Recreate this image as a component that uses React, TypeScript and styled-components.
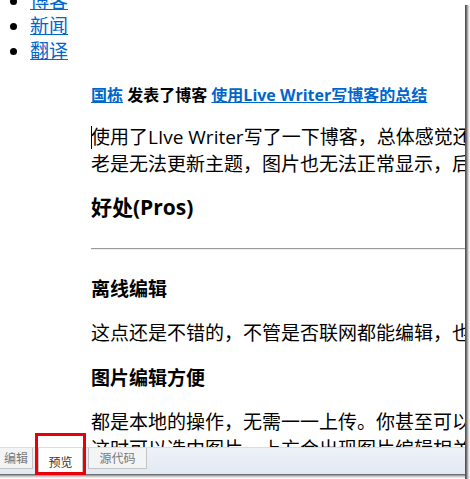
import styled, { createGlobalStyle } from "styled-components";

const GlobalStyle = createGlobalStyle`
  html, body {
    margin: 0;
    padding: 0;
    background: #ffffff;
    overflow: hidden;
  }
  body {
    font-family: "Open Sans", "Noto Sans CJK SC", sans-serif;
    color: #000000;
  }
`;

const navItems = ["博客", "新闻", "翻译"];

const paragraphs = {
  intro: [
    "使用了LIve Writer写了一下博客，总体感觉还不错，就是",
    "老是无法更新主题，图片也无法正常显示，后来才发现",
  ],
  offline: ["这点还是不错的，不管是否联网都能编辑，也不怕丢失"],
  images: [
    "都是本地的操作，无需一一上传。你甚至可以直接粘贴，",
    "这时可以选中图片，上方会出现图片编辑相关的工具栏。",
  ],
};

const tabs = [
  { label: "编辑", active: false },
  { label: "预览", active: true },
  { label: "源代码", active: false },
];

const App = () => {
  return <>
    <GlobalStyle />
    <Window>
      <Column>
        <Viewport>
          <NavList>
            {navItems.map(item =>
              <NavItem key={item}><Link href="#">{item}</Link></NavItem>)}
          </NavList>
          <Post>
            <PostMeta>
              <Link href="#">国栋</Link> 发表了博客 <Link href="#">使用Live Writer写博客的总结</Link>
            </PostMeta>
            <Para>
              <Caret />
              {paragraphs.intro[0]}<br />{paragraphs.intro[1]}
            </Para>
            <SectionTitle>好处(Pros)</SectionTitle>
            <Rule />
            <SubTitle first>离线编辑</SubTitle>
            <Para>{paragraphs.offline[0]}</Para>
            <SubTitle>图片编辑方便</SubTitle>
            <Para>{paragraphs.images[0]}<br />{paragraphs.images[1]}</Para>
          </Post>
        </Viewport>
        <TabBar>
          {tabs.map(tab =>
            <Tab key={tab.label} active={tab.active}>{tab.label}</Tab>)}
          <Highlight />
        </TabBar>
        <BottomEdge />
      </Column>
      <RightEdge />
    </Window>
  </>
}
export default App;

const Window = styled.div`
  display: flex;
  width: 470px;
  height: 479px;
`

const Column = styled.div`
  display: flex;
  flex-direction: column;
  width: 465px;
  height: 100%;
`

const RightEdge = styled.div`
  width: 5px;
  margin-top: 5px;
  background: linear-gradient(to right, #4a4a4a 0, #5c5c5c 1px, #8a8a8a 2px, #c4c4c4 3px, #e8e8e8 4px, #ffffff 5px);
`

const Viewport = styled.div`
  flex: 1;
  min-height: 0;
  overflow: hidden;
`

const NavList = styled.ul`
  margin: -11px 0 0;
  padding-left: 30px;
  list-style: disc;
`

const NavItem = styled.li`
  font-size: 19px;
  line-height: 25px;
`

const Link = styled.a`
  color: #0066cc;
  text-decoration: underline;
`

const Post = styled.div`
  padding-left: 91px;
  white-space: nowrap;
`

const PostMeta = styled.div`
  margin-top: 19px;
  font-size: 16px;
  font-weight: bold;
  line-height: 24px;
`

const Para = styled.p`
  margin: 17px 0 0;
  font-size: 19px;
  line-height: 27px;
`

const Caret = styled.span`
  display: inline-block;
  width: 0;
  height: 23px;
  margin-right: -1px;
  vertical-align: -5px;
  border-left: 1px solid #000000;
`

const SectionTitle = styled.h2`
  margin: 14px 0 0;
  font-size: 21px;
  font-weight: bold;
  line-height: 30px;
`

const Rule = styled.hr`
  margin: 26px 0 0;
  border: none;
  border-top: 1px solid #9a9a9a;
  border-bottom: 1px solid #eeeeee;
`

const SubTitle = styled.h3<{ first?: boolean }>`
  margin: ${props => props.first ? "26px" : "18px"} 0 0;
  font-size: 19px;
  font-weight: bold;
  line-height: 27px;
`

const TabBar = styled.div`
  position: relative;
  display: flex;
  align-items: flex-start;
  gap: 5px;
  height: 27px;
  flex-shrink: 0;
  background: linear-gradient(to bottom, #eef2f8, #e2e9f3);
  border-top: 1px solid #d6dde8;
  box-sizing: border-box;
  font-family: "Noto Sans CJK SC", sans-serif;
`

const Tab = styled.div<{ active: boolean }>`
  box-sizing: border-box;
  font-size: 12px;
  line-height: 16px;
  text-align: center;
  border: 1px solid #c4c4c4;
  border-top: none;
  ${props => props.active ? `
    width: 45px;
    height: 25px;
    padding-top: 6px;
    background: #ffffff;
    color: #333333;
    border-bottom: none;
  ` : `
    width: 59px;
    height: 21px;
    padding-top: 2px;
    background: #f3f4f6;
    color: #777777;
  `}
  &:first-child {
    width: 36px;
    margin-left: -3px;
    padding-left: 2px;
  }
`

const Highlight = styled.div`
  position: absolute;
  left: 35px;
  top: -15px;
  width: 51px;
  height: 42px;
  box-sizing: border-box;
  border: 3px solid #e8000b;
  pointer-events: none;
`

const BottomEdge = styled.div`
  height: 5px;
  flex-shrink: 0;
  background: linear-gradient(to bottom, #5a5a5a 0, #8a8a8a 1px, #b8b8b8 2px, #dedede 3px, #f4f4f4 4px, #ffffff 5px);
`
